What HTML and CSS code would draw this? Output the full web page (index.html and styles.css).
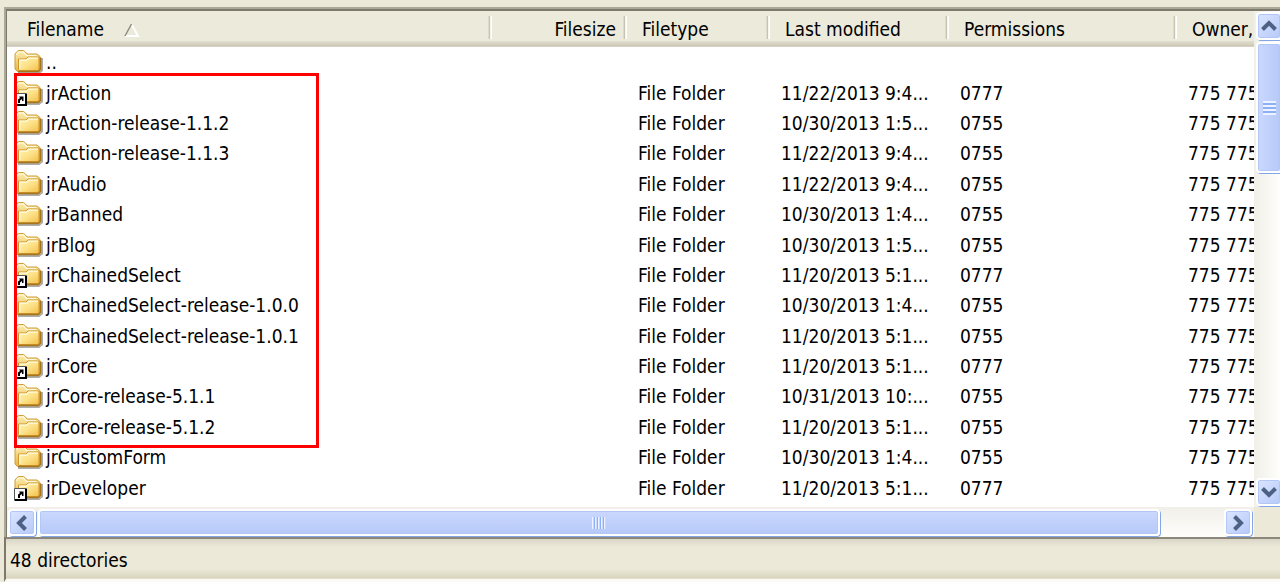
FILE: index.html
```html
<!DOCTYPE html>
<html lang="en">
<head>
    <meta charset="UTF-8">
    <meta name="viewport" content="width=device-width, initial-scale=1.0">
    <title>Remote files</title>
    <link rel="stylesheet" href="styles.css">
</head>
<body>
    <svg class="sprite" aria-hidden="true">
        <defs>
            <linearGradient id="folder-front" x1="0" y1="0" x2="1" y2="1">
                <stop offset="0" stop-color="#fff3b0"/>
                <stop offset="0.5" stop-color="#fde28a"/>
                <stop offset="1" stop-color="#f3c04a"/>
            </linearGradient>
            <linearGradient id="folder-back" x1="0" y1="0" x2="0" y2="1">
                <stop offset="0" stop-color="#fdedb0"/>
                <stop offset="1" stop-color="#e8b544"/>
            </linearGradient>
            <symbol id="folder" viewBox="0 0 30 26">
                <path d="M4 24h21l3-2.500V9" fill="none" stroke="#777" stroke-opacity="0.6" stroke-width="2"/>
                <path d="M1 5l2-2.500 2-1h4.500l2 1.500 1.500 2H23l3 2.500V20l-2 2.500H3.500L1 20z" fill="url(#folder-back)" stroke="#cf9c3c" stroke-width="1"/>
                <path d="M2.500 6l2-3h5l3 3.500H22" fill="none" stroke="#fffae0" stroke-width="1.200"/>
                <path d="M4.500 20.500V10h7.500l2-2H25v12l-1 1.500H5z" fill="url(#folder-front)" stroke="#cf9630" stroke-width="1"/>
                <path d="M5.800 20V11.200h7l2-2H24" fill="none" stroke="#fffbe0" stroke-width="1.200"/>
                <path d="M26.500 8.500v12l-2 2H4" fill="none" stroke="#a87418" stroke-width="1.500"/>
            </symbol>
            <symbol id="shortcut" viewBox="0 0 13 13">
                <path d="M0.500 0.500h12v12H0.500z" fill="#fff" stroke="#555"/>
                <path d="M12 1v11H1" fill="none" stroke="#000" stroke-width="2"/>
                <path d="M5 3.500h4.500V8H8V6L6 7.500V10H4V6.500L6 5z" fill="#000"/>
            </symbol>
            <symbol id="chevron" viewBox="0 0 16 12">
                <path d="M1.500 9.500L8 3l6.500 6.500" fill="none" stroke="#4d6185" stroke-width="4"/>
            </symbol>
        </defs>
    </svg>

    <div class="window">
        <div class="pane">
            <div class="list">
                <table class="files">
                    <colgroup>
                        <col>
                        <col class="col-size">
                        <col class="col-type">
                        <col class="col-modified">
                        <col class="col-permissions">
                        <col class="col-owner">
                    </colgroup>
                    <thead>
                        <tr>
                            <th scope="col">Filename
                                <svg class="sort" viewBox="0 0 16 14" aria-hidden="true">
                                    <path d="M8 2l6 11H1" fill="none" stroke="#fff" stroke-width="2"/>
                                    <path d="M1 13L7.500 1" fill="none" stroke="#8f8d82" stroke-width="1.500"/>
                                </svg>
                            </th>
                            <th scope="col" class="size">Filesize</th>
                            <th scope="col">Filetype</th>
                            <th scope="col">Last modified</th>
                            <th scope="col">Permissions</th>
                            <th scope="col">Owner,</th>
                        </tr>
                    </thead>
                    <tbody id="rows"></tbody>
                </table>
                <div class="highlight"></div>
            </div>

            <div class="scroll scroll-y">
                <button type="button" class="scroll-btn" aria-label="Scroll up"><svg class="arrow"><use href="#chevron"/></svg></button>
                <div class="thumb"><span class="grip"></span></div>
                <button type="button" class="scroll-btn end" aria-label="Scroll down"><svg class="arrow down"><use href="#chevron"/></svg></button>
            </div>

            <div class="scroll scroll-x">
                <button type="button" class="scroll-btn" aria-label="Scroll left"><svg class="arrow left"><use href="#chevron"/></svg></button>
                <div class="thumb"><span class="grip"></span></div>
                <button type="button" class="scroll-btn end" aria-label="Scroll right"><svg class="arrow right"><use href="#chevron"/></svg></button>
            </div>
            <div class="corner"></div>
        </div>
        <div class="status">48 directories</div>
    </div>

    <script src="files.js"></script>
</body>
</html>
```
FILE: styles.css
```css
:root {
    --face: #ece9d8;
    --line: #7d7a6c;
    --thumb-edge: #83a6e8;
}

* {
    margin: 0;
    padding: 0;
    box-sizing: border-box;
}

body {
    background: var(--face);
    color: #000;
    font-family: Tahoma, "DejaVu Sans Condensed", "DejaVu Sans", sans-serif;
    font-size: 19px;
    line-height: 24px;
    overflow: hidden;
}

.sprite {
    position: absolute;
    width: 0;
    height: 0;
}

.window {
    display: flex;
    flex-direction: column;
    height: 100vh;
    padding: 7px 0 0 4px;
}

.pane {
    flex: 1;
    min-height: 0;
    display: grid;
    grid-template-columns: minmax(0, 1fr) 26px;
    grid-template-rows: minmax(0, 1fr) 30px;
    border-style: solid;
    border-color: #aaa899 transparent transparent #aaa899;
    border-width: 2px 0 0 2px;
    box-shadow: inset 1px 2px 0 var(--line);
    padding: 2px 0 0 1px;
    background: var(--face);
}

.list {
    position: relative;
    padding-bottom: 4px;
    background: #fff;
    overflow: hidden;
}

/* file table */
.files {
    width: 100%;
    height: 100%;
    table-layout: fixed;
    border-collapse: collapse;
}

.col-size { width: 135px; }
.col-type { width: 143px; }
.col-modified { width: 179px; }
.col-permissions { width: 228px; }
.col-owner { width: 77px; }

.files th,
.files td {
    text-align: left;
    font-weight: normal;
    white-space: nowrap;
    overflow: hidden;
}

.files th {
    position: relative;
    height: 36px;
    padding: 0 0 0 15px;
    background: linear-gradient(#ebeadb 30px, #e2decd 30px, #d6d2c2 33px, #cbc7b8 35px, #dedbcf 36px);
}

.files th:first-child {
    padding-left: 20px;
}

.files th:not(:last-child)::after {
    content: '';
    position: absolute;
    top: 5px;
    right: 0;
    width: 4px;
    height: 23px;
    background: linear-gradient(to right, #dddbca 1px, #c7c5b2 1px, #c7c5b2 2px, #ebeadb 2px, #fff 3px);
}

.files th.size {
    text-align: right;
    padding-right: 11px;
}

.sort {
    width: 16px;
    height: 14px;
    margin-left: 15px;
    vertical-align: -1px;
}

.files td {
    padding-left: 11px;
}

.files td:first-child {
    padding-left: 7px;
}

.name {
    display: flex;
    align-items: center;
    gap: 2px;
}

.icon {
    position: relative;
    flex: none;
    width: 30px;
    height: 26px;
}

.icon svg {
    display: block;
    width: 30px;
    height: 26px;
}

.icon .link {
    position: absolute;
    left: 0;
    bottom: 0;
    width: 13px;
    height: 13px;
}

.highlight {
    position: absolute;
    top: 62px;
    left: 7px;
    width: 305px;
    height: 375px;
    border: 3px solid #f00;
}

/* scrollbars */
.scroll {
    display: flex;
    overflow: hidden;
}

.scroll-y {
    flex-direction: column;
    gap: 2px;
    padding: 1px 0 1px 2px;
    background: linear-gradient(to right, #f0efe8, #fefefb);
}

.scroll-x {
    gap: 2px;
    padding: 2px 2px 1px 1px;
    background: linear-gradient(#f0efe8, #fefefb);
}

.scroll-btn,
.thumb {
    flex: none;
    display: flex;
    align-items: center;
    justify-content: center;
    border: 2px solid #fff;
    border-radius: 4px;
    box-shadow: inset 0 0 0 1px #b3c7f7, 1px 1px 0 var(--thumb-edge);
}

.scroll-btn {
    width: 28px;
    height: 27px;
    background: linear-gradient(135deg, #dbe5ff, #b6c9f8);
}

.scroll-y .scroll-btn {
    width: 26px;
    height: 28px;
}

.scroll-btn.end {
    margin-top: auto;
}

.scroll-x .end {
    margin: 0 0 0 auto;
}

.scroll-y .thumb {
    width: 26px;
    height: 131px;
    background: linear-gradient(to right, #cbd8fd, #b6c9f9);
}

.scroll-x .thumb {
    width: 92%;
    max-width: calc(100% - 122px);
    height: 27px;
    background: linear-gradient(#cbd8fd, #b6c9f9);
}

.grip {
    width: 14px;
    height: 12px;
    background: repeating-linear-gradient(to right, #eef4ff 0 1px, #cbd8fd 1px 2px, #8cb0f8 2px 3px);
}

.scroll-y .grip {
    width: 13px;
    height: 14px;
    background: repeating-linear-gradient(#eef4ff 0 2px, #8cb0f8 2px 4px);
}

.arrow {
    flex: none;
    width: 16px;
    height: 12px;
}

.arrow.down { transform: rotate(180deg); }
.arrow.left { transform: rotate(-90deg); }
.arrow.right { transform: rotate(90deg); }

.corner {
    background: var(--face);
}

.status {
    flex: none;
    height: 45px;
    padding: 11px 4px 0;
    border-left: 2px solid var(--line);
    border-bottom: 3px solid #fbfaf4;
    background: linear-gradient(#8b887b 2px, #d9d6c8 2px, #ece9d8 10px, #ece9d8 32px, #d8d4bf 41px, #ece9d8 42px);
}
```
FILE: files.js
```js
// name, last modified, permissions
const files = [
    ['jrAction', '11/22/2013 9:4...', '0777'],
    ['jrAction-release-1.1.2', '10/30/2013 1:5...', '0755'],
    ['jrAction-release-1.1.3', '11/22/2013 9:4...', '0755'],
    ['jrAudio', '11/22/2013 9:4...', '0755'],
    ['jrBanned', '10/30/2013 1:4...', '0755'],
    ['jrBlog', '10/30/2013 1:5...', '0755'],
    ['jrChainedSelect', '11/20/2013 5:1...', '0777'],
    ['jrChainedSelect-release-1.0.0', '10/30/2013 1:4...', '0755'],
    ['jrChainedSelect-release-1.0.1', '11/20/2013 5:1...', '0755'],
    ['jrCore', '11/20/2013 5:1...', '0777'],
    ['jrCore-release-5.1.1', '10/31/2013 10:...', '0755'],
    ['jrCore-release-5.1.2', '11/20/2013 5:1...', '0755'],
    ['jrCustomForm', '10/30/2013 1:4...', '0755'],
    ['jrDeveloper', '11/20/2013 5:1...', '0777']
];

function row(name, type, modified, permissions, owner) {
    // symlinked folders are the 0777 ones
    const link = permissions === '0777' ? '<svg class="link"><use href="#shortcut"/></svg>' : '';
    return `<tr>
        <td><div class="name"><span class="icon"><svg><use href="#folder"/></svg>${link}</span>${name}</div></td>
        <td></td>
        <td>${type}</td>
        <td>${modified}</td>
        <td>${permissions}</td>
        <td>${owner}</td>
    </tr>`;
}

document.getElementById('rows').innerHTML = row('..', '', '', '', '') +
    files.map(f => row(f[0], 'File Folder', f[1], f[2], '775 775')).join('');
```
